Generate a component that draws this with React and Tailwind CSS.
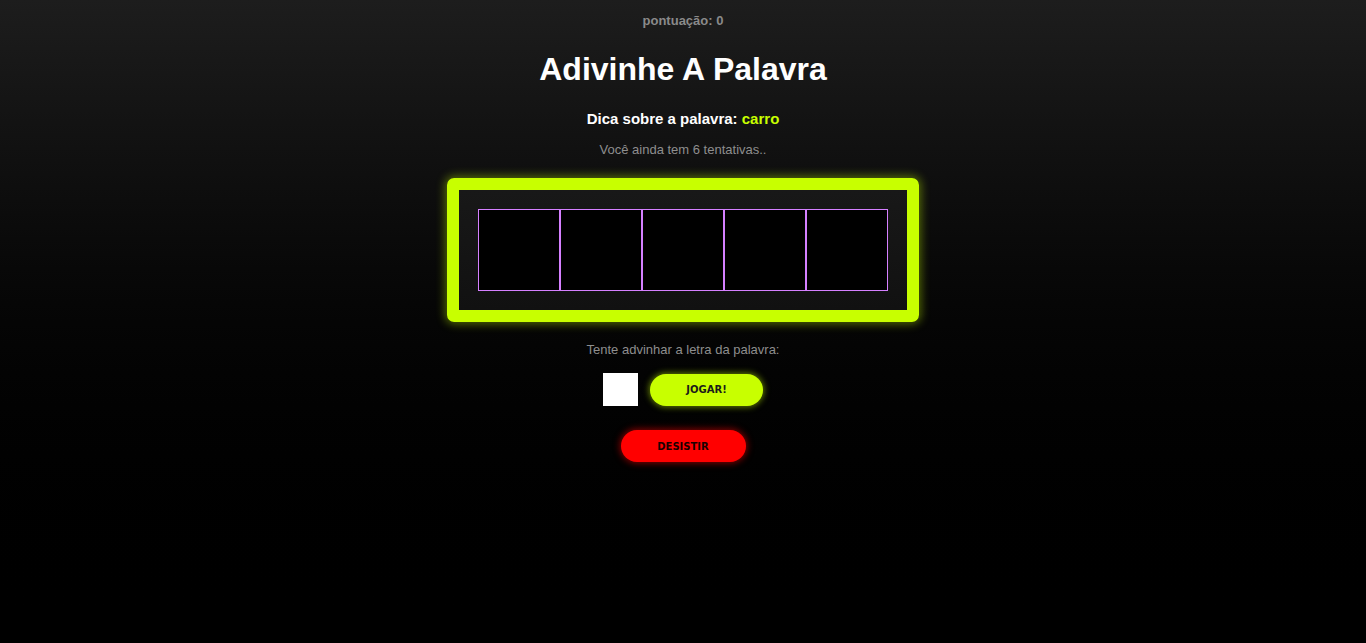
export default function App() {
  const letters = ["", "", "", "", ""];

  return (
    <div className="min-h-[643px] w-full bg-gradient-to-b from-[#1d1d1d] to-[#000000] font-['Liberation_Sans',Arial,sans-serif] flex flex-col items-center">
      <p className="mt-[13px] text-[13px] leading-[16px] font-bold text-[#8a8a8a]">
        pontuação: 0
      </p>

      <h1 className="mt-[22px] text-[32px] leading-[37px] font-bold text-white">
        Adivinhe A Palavra
      </h1>

      <p className="mt-[22px] text-[15px] leading-[18px] font-bold text-white">
        Dica sobre a palavra: <span className="text-[#c8ff00]">carro</span>
      </p>

      <p className="mt-[14px] text-[13px] leading-[15px] text-[#8e8e8e]">
        Você ainda tem 6 tentativas..
      </p>

      <div className="mt-[21px] w-[472px] h-[144px] border-[12px] border-[#c8ff00] rounded-[7px] bg-gradient-to-b from-[#181818] to-[#111111] p-[19px] shadow-[0_0_10px_2px_rgba(200,255,0,0.4)]">
        <div className="flex">
          {letters.map((l, i) => (
            <div
              key={i}
              className="w-[82px] h-[82px] border border-[#d580ff] bg-black text-white flex items-center justify-center text-3xl"
            >
              {l}
            </div>
          ))}
        </div>
      </div>

      <p className="mt-[20px] text-[13px] leading-[15px] text-[#8e8e8e]">
        Tente advinhar a letra da palavra:
      </p>

      <div className="mt-[16px] flex items-center gap-[12px]">
        <input
          type="text"
          maxLength={1}
          className="w-[35px] h-[33px] bg-white outline-none text-center"
        />
        <button className="w-[113px] h-[32px] rounded-full bg-[#c8ff00] text-[#1a1a1a] text-[10px] font-bold font-['DejaVu_Sans',Verdana,sans-serif] shadow-[0_0_6px_1px_rgba(200,255,0,0.5)]">
          JOGAR!
        </button>
      </div>

      <button className="mt-[24px] w-[125px] h-[32px] rounded-full bg-[#ff0000] text-[#1a0000] text-[10px] font-bold font-['DejaVu_Sans',Verdana,sans-serif] shadow-[0_0_7px_1px_rgba(255,0,0,0.55)]">
        DESISTIR
      </button>
    </div>
  );
}
